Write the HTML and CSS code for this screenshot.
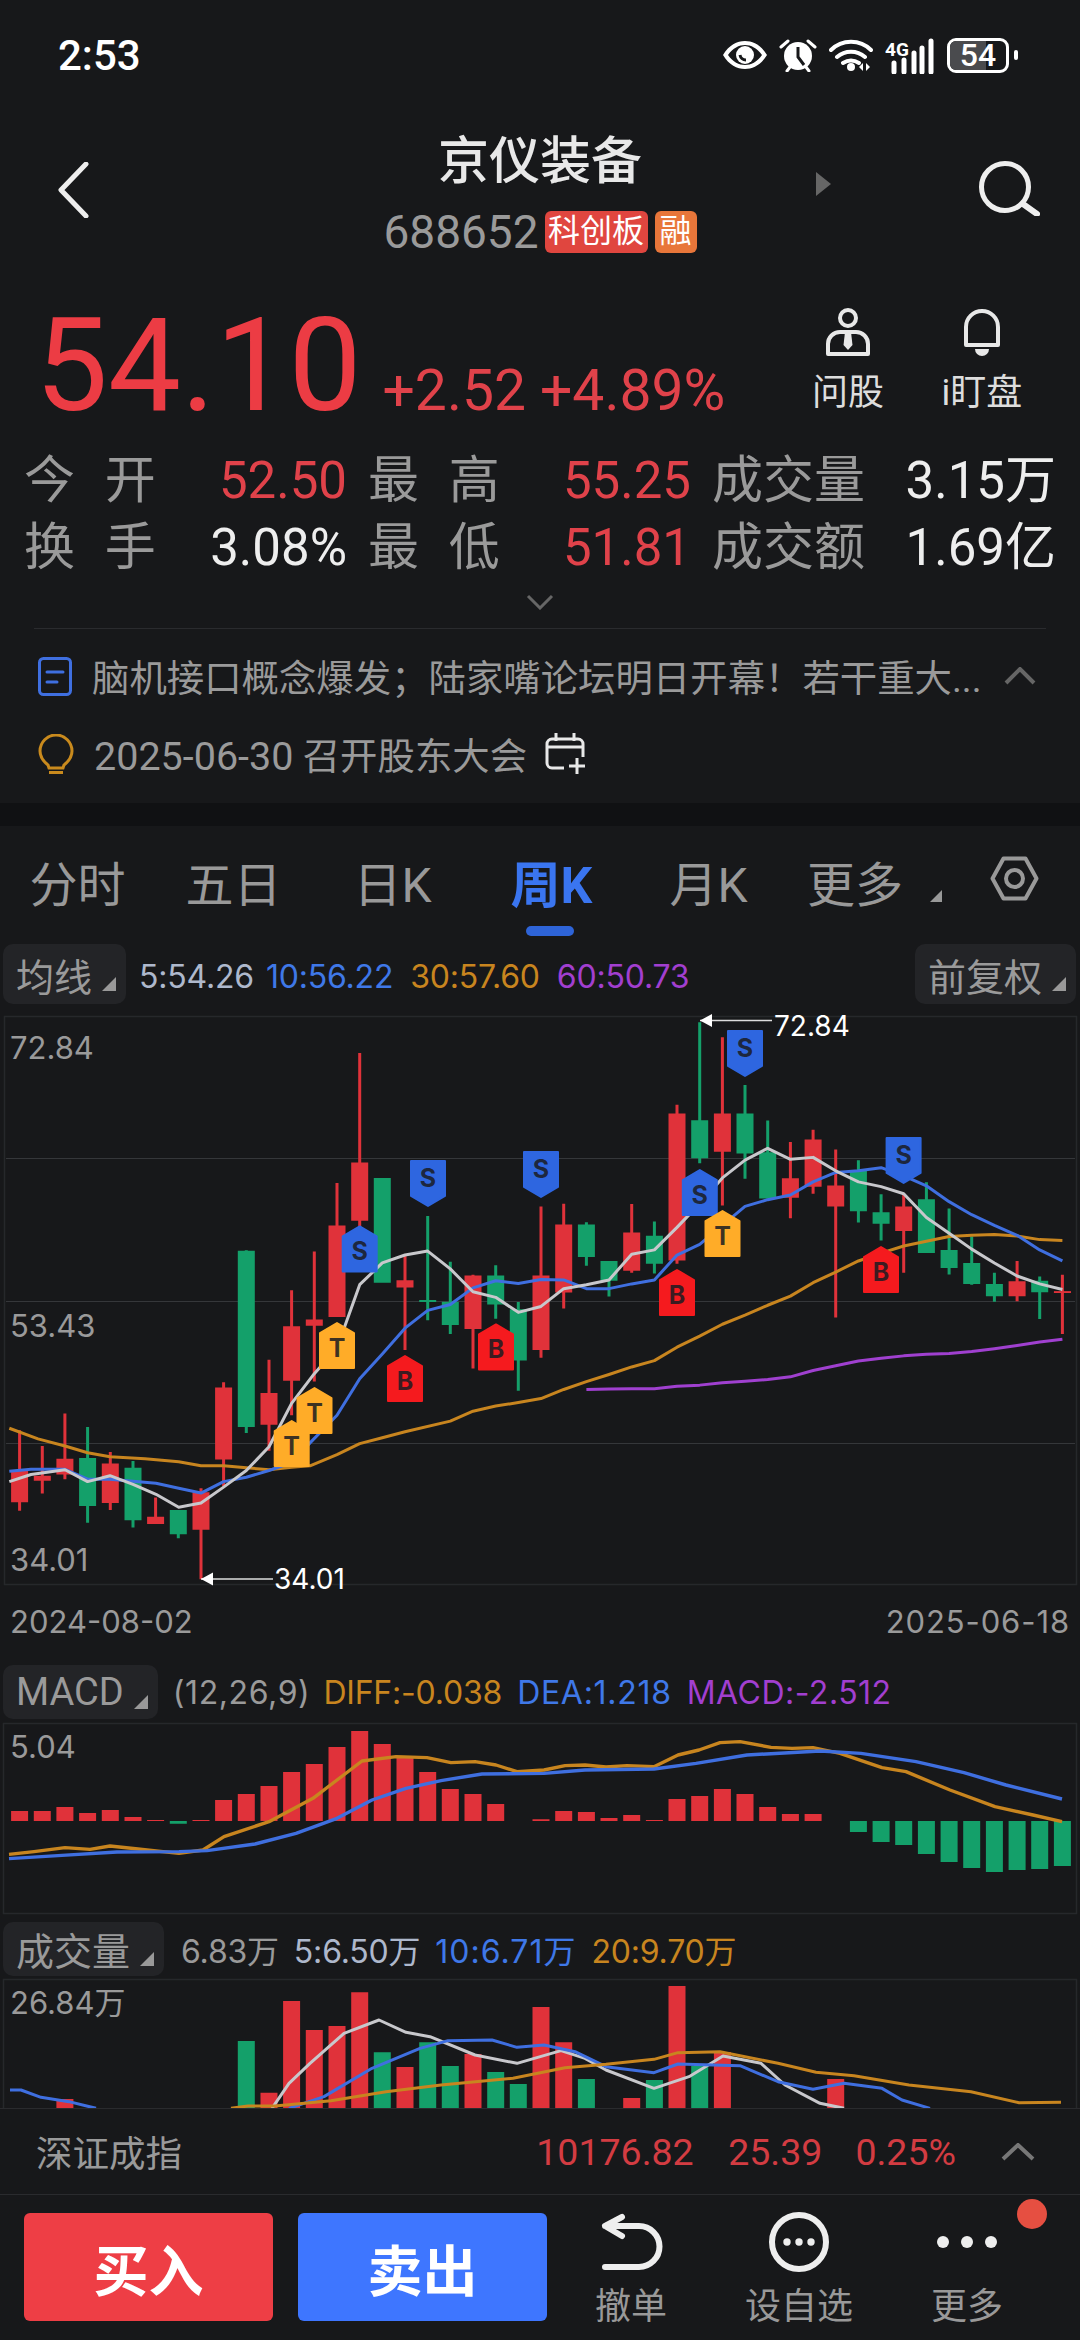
FILE: index.html
```html
<!DOCTYPE html>
<html lang="zh-CN">
<head>
<meta charset="utf-8">
<title>京仪装备</title>
<link rel="stylesheet" href="styles.css">
</head>
<body>
<div class="page">
  <div class="status">
    <span class="time">2:53</span>
    <div class="status-icons">
      <svg width="44" height="28" viewBox="0 0 44 28"><path class="i-fill" fill-rule="evenodd" d="M0 14C6 4 14 0 22 0s16 4 22 14c-6 10-14 14-22 14S6 24 0 14zm5 0c5 7 11 10 17 10s12-3 17-10C34 7 28 4 22 4S10 7 5 14z"/><circle class="i-fill" cx="22" cy="14" r="9"/><path d="M17 14a6 6 0 0 0 6 5" fill="none" stroke="#17181a" stroke-width="3"/></svg>
      <svg width="38" height="34" viewBox="0 0 38 34"><circle class="i-fill" cx="19" cy="18" r="14"/><path d="M19 9v10l6 8" fill="none" stroke="#17181a" stroke-width="3"/><path d="M2 9l7-6M36 9l-7-6M8 33l3-4M30 33l-3-4" class="i-line" stroke-width="3"/></svg>
      <svg width="44" height="32" viewBox="0 0 44 32"><path d="M2 11C13 0 31 0 42 11M8 18c8-7 20-7 28 0M14 24c5-3 11-3 16 0" class="i-line" stroke-width="4"/><circle class="i-fill" cx="22" cy="28" r="4"/><path class="i-fill" d="M34 24v8l-4-4zM37 24v8l4-4z"/></svg>
      <svg width="50" height="38" viewBox="0 -4 50 38"><text class="net" x="0" y="16">4G</text><path d="M9 23v9M19 20v12M29 13v19M37 8v24M46 1v31" class="i-line" stroke-width="5"/></svg>
      <div class="battery"><span class="battery-fill"></span><span class="battery-num">54</span></div>
      <span class="battery-nub"></span>
    </div>
  </div>

  <header class="nav">
    <div class="nav-left">
      <svg width="32" height="56" viewBox="0 0 32 56"><path d="M28 2L3 28l25 26" fill="none" stroke="#eee" stroke-width="5" stroke-linecap="round" stroke-linejoin="round"/></svg>
    </div>
    <div class="nav-center">
      <h1 class="title">京仪装备</h1>
      <div class="code-row">
        <span class="code">688652</span>
        <span class="badge badge-red">科创板</span>
        <span class="badge badge-orange">融</span>
      </div>
    </div>
    <div class="nav-right">
      <span class="nav-tri"></span>
      <svg width="62" height="56" viewBox="0 0 62 56"><circle cx="27" cy="27" r="23.500" fill="none" stroke="#eee" stroke-width="5"/><path d="M45 44l14 10" stroke="#eee" stroke-width="6" stroke-linecap="round"/></svg>
    </div>
  </header>

  <section class="quote">
    <span class="price">54.10</span>
    <span class="change">+2.52</span>
    <span class="change change-2">+4.89%</span>
    <div class="actions">
      <div class="action">
        <svg width="46" height="48" viewBox="0 0 46 48"><circle cx="23" cy="10" r="8" fill="none" stroke="#e8e8e8" stroke-width="4"/><path d="M3 46V36a12 12 0 0 1 12-12h16a12 12 0 0 1 12 12v10z" fill="none" stroke="#e8e8e8" stroke-width="4" stroke-linejoin="round"/><path fill="#e8e8e8" d="M20 24h6l1.500 13L23 42l-4.500-5z"/></svg>
        <span class="action-label">问股</span>
      </div>
      <div class="action">
        <svg width="38" height="48" viewBox="0 0 38 48"><path d="M3 37V19a16 16 0 0 1 32 0v18z" fill="none" stroke="#e8e8e8" stroke-width="4" stroke-linejoin="round"/><path fill="#e8e8e8" d="M12 41h14a7 7 0 0 1-14 0z"/></svg>
        <span class="action-label">i盯盘</span>
      </div>
    </div>
  </section>

  <section class="stats">
    <div class="stat"><span class="stat-label">今 开</span><span class="up">52.50</span></div>
    <div class="stat"><span class="stat-label">最 高</span><span class="up">55.25</span></div>
    <div class="stat"><span class="stat-label">成交量</span><span class="flat">3.15万</span></div>
    <div class="stat"><span class="stat-label">换 手</span><span class="flat">3.08%</span></div>
    <div class="stat"><span class="stat-label">最 低</span><span class="up">51.81</span></div>
    <div class="stat"><span class="stat-label">成交额</span><span class="flat">1.69亿</span></div>
  </section>

  <div class="expand"><svg width="28" height="16" viewBox="0 0 28 16"><path d="M2 2l12 12L26 2" fill="none" stroke="#666" stroke-width="3"/></svg></div>

  <section class="notes">
    <div class="note">
      <svg width="34" height="39" viewBox="0 0 34 39"><rect x="1.500" y="1.500" width="31" height="36" rx="4" fill="none" stroke="#3f6fe0" stroke-width="3"/><path d="M9 15h16M9 25h10" stroke="#3f6fe0" stroke-width="3" stroke-linecap="round"/></svg>
      <span class="note-text">脑机接口概念爆发；陆家嘴论坛明日开幕！若干重大...</span>
      <svg class="note-up" width="32" height="18" viewBox="0 0 32 18"><path d="M2 16L16 2l14 14" fill="none" stroke="#666" stroke-width="4"/></svg>
    </div>
    <div class="note">
      <svg width="36" height="41" viewBox="0 0 36 41"><path d="M10 31C5 27 2 22 2 17a16 16 0 1 1 32 0c0 5-3 10-8 14l-1 3H11zM11 38.500h14" fill="none" stroke="#c98a1d" stroke-width="3"/></svg>
      <span class="note-text"><span class="note-date">2025-06-30</span> 召开股东大会</span>
      <svg class="note-cal" width="42" height="42" viewBox="0 0 42 42"><path d="M20 35H8a5 5 0 0 1-5-5V11a5 5 0 0 1 5-5h26a5 5 0 0 1 5 5v13M3 14h36M12 0v8M30 0v8M33 25v16M25 33h16" fill="none" stroke="#e8e8e8" stroke-width="3"/></svg>
    </div>
  </section>

  <div class="band"></div>

  <nav class="tabs">
    <span class="tab">分时</span>
    <span class="tab">五日</span>
    <span class="tab">日K</span>
    <span class="tab tab-active">周K</span>
    <span class="tab">月K</span>
    <span class="tab tab-more">更多<i class="tri tri-more"></i></span>
    <svg class="tab-gear" width="49" height="45" viewBox="0 0 49 45"><path d="M2.500 22.500L13.500 2.500h22l11 20-11 20h-22z" fill="none" stroke="#999" stroke-width="4" stroke-linejoin="round"/><circle cx="24.500" cy="22.500" r="8.500" fill="none" stroke="#999" stroke-width="4"/></svg>
  </nav>

  <div class="ind-row ind-ma">
    <span class="chip">均线<i class="tri"></i></span>
    <span class="val pale">5:54.26</span>
    <span class="val blue">10:56.22</span>
    <span class="val orange">30:57.60</span>
    <span class="val purple">60:50.73</span>
    <span class="chip chip-right">前复权<i class="tri"></i></span>
  </div>

  <svg class="chart" width="1080" height="600" viewBox="0 1004 1080 600">
    <rect class="frame" x="4.500" y="1016.500" width="1072" height="568"/>
    <path class="grid" d="M6 1158.500H1075M6 1301.500H1075M6 1443.500H1075"/>
    <g transform="translate(0 1000) scale(1 .39541)">
      <path class="wick red" d="M19.600 1088V1292M42.300 1128V1248M64.900 1046V1212M110.300 1143V1290M155.600 1258V1325M201 1235V1465M223.600 967V1230M269 910V1140M291.600 734V1050M314.300 636V965M337 463V802M359.700 134V600M405 645V885M473 695V932M541 522V905M563.700 515V780M631.700 516V690M677 265V667M722.400 94V520M790.400 359V552M813.100 328V490M835.700 378V803M903.700 490V690M1017.100 660V762M1062.400 695V845"/>
      <path class="body red" d="M19.600 1190V1270M42.300 1203V1216M64.900 1160V1200M110.300 1172V1272M155.600 1307V1325M201 1245V1340M223.600 980V1162M269 994V1074M291.600 825V963M314.300 808V824M337 570V802M359.700 411V558M405 709V727M473 697V832M541 697V885M563.700 568V740M631.700 588V685M677 287V659M722.400 287V384M790.400 451V500M813.100 353V472M835.700 469V522M903.700 522V584M1017.100 711V749M1062.400 737V741"/>
      <path class="wick green" d="M87.600 1080V1322M133 1166V1334M178.300 1290V1361M246.300 633V1095M427.700 546V810M450.300 662V845M495.700 671V806M518.300 764V988M586.400 562V672M609 660V750M654.400 560V692M699.700 56V413M745 215V452M767.700 305V502M858.400 405V563M881.100 491V608M926.400 461V640M949.100 527V694M971.700 598V720M994.400 690V763M1039.700 699V807"/>
      <path class="body green" d="M87.600 1158V1280M133 1183V1316M178.300 1290V1351M246.300 634V1080M382.300 450V715M427.700 759V764M450.300 763V822M495.700 697V770M518.300 782V912M586.400 568V650M609 660V710M654.400 596V667M699.700 304V400M745 287V388M767.700 385V502M858.400 430V534M881.100 537V566M926.400 504V640M949.100 632V678M971.700 665V718M994.400 718V749M1039.700 710V739"/>
      <polyline class="ma ma-orange" points="9.300,1083 38,1110 65,1128 87.600,1145 110,1155 145,1160 178.700,1168 201,1178 223.600,1178 246.300,1183 269,1188 291.600,1182 310,1178 337,1150 359.700,1122 382.300,1107 405,1092 450.300,1065 473,1040 495.700,1027 518.300,1018 541,1008 563.700,985 586.400,965 609,947 631.700,928 654.400,912 677,878 699.700,850 722.400,820 745,797 767.700,772 790.400,749 813.100,715 835.700,688 858.400,660 881.100,640 903.700,622 926.400,610 949.100,598 971.700,595 994.400,593 1017.100,597 1039.700,606 1062.400,608"/>
      <polyline class="ma ma-purple" points="586.400,985 609,984 631.700,983 654.400,983 677,977 699.700,974 722.400,968 745,964 767.700,960 790.400,953 813.100,937 835.700,925 858.400,913 881.100,906 903.700,900 926.400,896 949.100,894 971.700,889 994.400,882 1017.100,874 1039.700,865 1062.400,858"/>
      <polyline class="ma ma-blue" points="9.300,1192 31,1187 65,1187 87.600,1212 110,1212 133,1217 156,1222 178.700,1235 201,1247 223.600,1218 246.300,1207 269,1190 291.600,1170 310,1120 337,1050 359.700,958 382.300,895 405,830 427.700,785 450.300,770 473,728 495.700,710 518.300,717 541,707 563.700,708 586.400,730 609,730 631.700,718 654.400,708 677,645 699.700,618 722.400,570 745,522 767.700,505 790.400,493 813.100,460 835.700,436 858.400,432 881.100,424 903.700,445 926.400,470 949.100,510 971.700,543 994.400,570 1017.100,595 1039.700,632 1062.400,660"/>
      <polyline class="ma ma-white" points="9.300,1218 31,1200 65,1188 87.600,1218 110,1203 133,1225 156,1250 178.700,1283 201,1272 223.600,1232 246.300,1190 269,1130 291.600,1020 314.300,945 337,880 359.700,720 382.300,665 405,645 427.700,635 450.300,680 473,738 495.700,752 518.300,790 541,775 563.700,730 586.400,720 609,708 631.700,643 654.400,632 677,575 699.700,515 722.400,450 745,405 767.700,375 790.400,403 813.100,398 835.700,432 858.400,460 881.100,472 903.700,490 926.400,550 949.100,590 971.700,630 994.400,665 1017.100,698 1039.700,718 1062.400,732"/>
    </g>
    <path d="M1054 1292H1071" stroke="#e0323a" stroke-width="1.500"/>
    <text class="ax" x="10" y="1059">72.84</text>
    <text class="ax" x="10" y="1337">53.43</text>
    <text class="ax" x="10" y="1571">34.01</text>
    <path class="anno-line" d="M700 1020.500H772M201 1579H273"/>
    <path class="anno-head" d="M700 1020.500l12-6.500v13zM201 1579l12-6.500v13z"/>
    <text class="anno" x="774" y="1036">72.84</text>
    <text class="anno" x="274" y="1589">34.01</text>
    <g transform="translate(341.700 1225.400)"><path class="mk mk-s" d="M1 11L18 1l17 10v35H1z"/><text class="mk-t" x="18" y="35">S</text></g>
    <g transform="translate(410 1160)"><path class="mk mk-s" d="M1 1h34v35L18 46 1 36z"/><text class="mk-t" x="18" y="27">S</text></g>
    <g transform="translate(523 1151)"><path class="mk mk-s" d="M1 1h34v35L18 46 1 36z"/><text class="mk-t" x="18" y="27">S</text></g>
    <g transform="translate(727 1030)"><path class="mk mk-s" d="M1 1h34v35L18 46 1 36z"/><text class="mk-t" x="18" y="27">S</text></g>
    <g transform="translate(681.800 1169)"><path class="mk mk-s" d="M1 11L18 1l17 10v35H1z"/><text class="mk-t" x="18" y="35">S</text></g>
    <g transform="translate(885.600 1137)"><path class="mk mk-s" d="M1 1h34v35L18 46 1 36z"/><text class="mk-t" x="18" y="27">S</text></g>
    <g transform="translate(273.700 1420)"><path class="mk mk-t-bg" d="M1 11L18 1l17 10v35H1z"/><text class="mk-t" x="18" y="35">T</text></g>
    <g transform="translate(296.500 1387)"><path class="mk mk-t-bg" d="M1 11L18 1l17 10v35H1z"/><text class="mk-t" x="18" y="35">T</text></g>
    <g transform="translate(319 1322)"><path class="mk mk-t-bg" d="M1 11L18 1l17 10v35H1z"/><text class="mk-t" x="18" y="35">T</text></g>
    <g transform="translate(704.500 1210)"><path class="mk mk-t-bg" d="M1 11L18 1l17 10v35H1z"/><text class="mk-t" x="18" y="35">T</text></g>
    <g transform="translate(387 1355)"><path class="mk mk-b" d="M1 11L18 1l17 10v35H1z"/><text class="mk-t" x="18" y="35">B</text></g>
    <g transform="translate(478 1323.400)"><path class="mk mk-b" d="M1 11L18 1l17 10v35H1z"/><text class="mk-t" x="18" y="35">B</text></g>
    <g transform="translate(659 1269)"><path class="mk mk-b" d="M1 11L18 1l17 10v35H1z"/><text class="mk-t" x="18" y="35">B</text></g>
    <g transform="translate(863 1246)"><path class="mk mk-b" d="M1 11L18 1l17 10v35H1z"/><text class="mk-t" x="18" y="35">B</text></g>
  </svg>

  <div class="dates"><span>2024-08-02</span><span class="date-end">2025-06-18</span></div>

  <div class="ind-row ind-macd">
    <span class="chip">MACD<i class="tri"></i></span>
    <span class="val muted">(12,26,9)</span>
    <span class="val orange">DIFF:-0.038</span>
    <span class="val blue">DEA:1.218</span>
    <span class="val purple">MACD:-2.512</span>
  </div>

  <svg class="chart chart-macd" width="1080" height="195" viewBox="0 1720 1080 195">
    <rect class="frame" x="3.500" y="1723.500" width="1073" height="190"/>
    <g transform="translate(0 1620) scale(1 .33333)">
      <path class="body red" d="M19.600 603V573M42.300 603V573M64.900 603V561M87.600 603V579M110.300 603V570M133 603V591M155.600 603V600M201 603V600M223.600 603V540M246.300 603V522M269 603V498M291.600 603V456M314.300 603V432M337 603V381M359.700 603V333M382.300 603V372M405 603V411M427.700 603V456M450.300 603V507M473 603V522M495.700 603V552M541 603V598M563.700 603V573M586.400 603V576M609 603V594M631.700 603V585M654.400 603V600M677 603V537M699.700 603V528M722.400 603V507M745 603V522M767.700 603V561M790.400 603V582M813.100 603V582"/>
      <path class="body green" d="M178.300 603V611M858.400 603V636M881.100 603V666M903.700 603V675M926.400 603V702M949.100 603V726M971.700 603V744M994.400 603V756M1017.100 603V750M1039.700 603V747M1062.400 603V738"/>
      <polyline class="ma ma-orange" points="9,703 34,695 65,683 90,688 110,678 138,687 179,700 203,690 224,650 269,605 313,535 337,480 362,423 396,410 427,413 451,428 475,425 496,435 517,455 544,450 565,437 585,435 606,441 627,437 654,440 678,405 699,390 720,368 740,365 771,382 792,385 813,383 840,400 882,443 906,455 950,510 995,560 1033,585 1062,605"/>
      <polyline class="ma ma-blue" points="9,716 62,706 117,696 179,695 207,692 255,672 296,640 337,595 372,540 406,505 441,482 482,462 544,460 585,450 654,447 696,430 747,405 820,393 861,400 916,425 964,458 1006,495 1062,537"/>
    </g>
    <text class="ax" x="10" y="1758">5.04</text>
  </svg>

  <div class="ind-row ind-vol">
    <span class="chip">成交量<i class="tri"></i></span>
    <span class="val muted">6.83万</span>
    <span class="val pale">5:6.50万</span>
    <span class="val blue">10:6.71万</span>
    <span class="val orange">20:9.70万</span>
  </div>

  <svg class="chart chart-vol" width="1080" height="131" viewBox="0 1977 1080 131">
    <path class="frame" d="M3.500 2108V1979.500H1076.500V2108"/>
    <g transform="translate(0 1900) scale(1 .33333)">
      <path class="body red" d="M64.900 625V597M269 625V578M291.600 625V303M314.300 625V390M337 625V378M359.700 625V277M405 625V501M473 625V462M541 625V321M563.700 625V427M631.700 625V594M677 625V258M722.400 625V456M835.700 625V537"/>
      <path class="body green" d="M246.300 625V423M382.300 625V457M427.700 625V427M450.300 625V498M495.700 625V516M518.300 625V552M586.400 625V537M654.400 625V540M699.700 625V498"/>
      <polyline class="ma ma-white" points="272,625 289,550 310,490 344,400 379,360 406,397 430,410 475,465 517,490 561,452 585,475 606,510 654,565 689,530 723,468 761,490 785,555 820,610 844,625"/>
      <polyline class="ma ma-blue" points="10,570 21,570 41,592 69,605 96,625"/>
      <polyline class="ma ma-blue" points="289,625 324,590 372,505 420,445 448,422 492,420 517,442 544,435 575,455 606,500 654,518 678,492 740,497 778,545 813,568 844,550 882,565 902,600 930,625"/>
      <polyline class="ma ma-orange" points="231,625 248,618 275,618 331,602 386,575 441,555 513,535 565,503 606,493 654,478 678,458 720,455 778,490 816,517 854,527 909,555 971,575 1019,608 1061,607"/>
    </g>
    <text class="ax" x="10" y="2014">26.84万</text>
  </svg>

  <div class="index-bar">
    <span class="index-name">深证成指</span>
    <span class="index-val i-1">10176.82</span>
    <span class="index-val i-2">25.39</span>
    <span class="index-val i-3">0.25%</span>
    <svg class="index-up" width="34" height="18" viewBox="0 0 34 18"><path d="M2 16L17 2l15 14" fill="none" stroke="#777" stroke-width="4"/></svg>
  </div>

  <footer class="bottom">
    <span class="btn btn-buy">买入</span>
    <span class="btn btn-sell">卖出</span>
    <div class="tool">
      <svg width="64" height="60" viewBox="0 0 64 60"><path d="M6 14h34a20.500 20.500 0 0 1 0 41H6M23 5L6 14l17 10" fill="none" stroke="#eee" stroke-width="6" stroke-linecap="round" stroke-linejoin="round"/></svg>
      <span class="tool-label">撤单</span>
    </div>
    <div class="tool">
      <svg width="62" height="60" viewBox="0 0 62 60"><circle cx="31" cy="30" r="27" fill="none" stroke="#eee" stroke-width="6"/><circle cx="19" cy="30" r="3.700" fill="#eee"/><circle cx="31" cy="30" r="3.700" fill="#eee"/><circle cx="43" cy="30" r="3.700" fill="#eee"/></svg>
      <span class="tool-label">设自选</span>
    </div>
    <div class="tool">
      <svg width="62" height="60" viewBox="0 0 62 60"><circle cx="7" cy="30" r="6" fill="#eee"/><circle cx="31" cy="30" r="6" fill="#eee"/><circle cx="55" cy="30" r="6" fill="#eee"/></svg>
      <span class="tool-label">更多</span>
    </div>
    <span class="red-dot"></span>
  </footer>
</div>
</body>
</html>
```
FILE: styles.css
```css
* { box-sizing: border-box; }
html, body { margin: 0; padding: 0; background: #17181a; }
body { font-family: Roboto, "Noto Sans CJK SC", sans-serif; color: #eee; }
.page { width: 1080px; height: 2340px; overflow: hidden; display: flex; flex-direction: column; position: relative; background: #17181a; }

.status { height: 110px; flex: none; display: flex; align-items: center; justify-content: space-between; padding: 0 62px 0 58px; }
.time { font-size: 42px; font-weight: 500; color: #fff; }
.status-icons { display: flex; align-items: center; gap: 12px; }
.i-fill { fill: #fff; }
.i-line { fill: none; stroke: #fff; stroke-linecap: round; }
.net { font-family: Roboto, sans-serif; font-size: 19px; font-weight: 700; fill: #fff; }
.battery { position: relative; width: 62px; height: 35px; border: 3px solid #fff; border-radius: 9px; overflow: hidden; display: flex; align-items: center; justify-content: center; }
.battery-fill { position: absolute; left: 0; top: 0; bottom: 0; width: 36px; background: #4a4b4e; }
.battery-num { position: relative; font-size: 32px; font-weight: 500; color: #fff; line-height: 1; }
.battery-nub { width: 4px; height: 10px; background: #fff; border-radius: 2px; margin-left: -7px; }

.nav { height: 160px; flex: none; display: grid; grid-template-columns: 1fr auto 1fr; align-items: start; }
.nav-left { padding: 52px 0 0 58px; }
.nav-center { display: flex; flex-direction: column; align-items: center; }
.title { margin: 22px 0 0; font-size: 51px; font-weight: 500; line-height: 60px; color: #e8e8e8; }
.code-row { display: flex; align-items: center; margin-top: 18px; height: 44px; white-space: nowrap; }
.code { font-size: 46px; color: #9a9a9a; margin-right: 6px; }
.badge { height: 42px; border-radius: 6px; color: #fff; font-size: 32px; line-height: 41px; text-align: center; white-space: nowrap; }
.badge-red { background: #e0463f; width: 103px; }
.badge-orange { background: #e8763a; margin-left: 7px; width: 42px; }
.nav-right { display: flex; justify-content: flex-end; align-items: flex-start; padding: 50px 40px 0 0; position: relative; }
.nav-tri { position: absolute; left: 119px; top: 62px; width: 0; height: 0; border-left: 15px solid #666; border-top: 12px solid transparent; border-bottom: 12px solid transparent; }

.quote { height: 177px; flex: none; display: flex; align-items: baseline; padding: 21px 31px 0 35px; }
.price { font-size: 130px; line-height: 150px; color: #ec3c44; font-weight: 400; }
.change { font-size: 57px; color: #e0424a; margin-left: 21px; }
.change-2 { margin-left: 14px; }
.actions { margin-left: auto; margin-top: 17px; align-self: flex-start; display: flex; }
.action { width: 134px; display: flex; flex-direction: column; align-items: center; }
.action-label { font-size: 36px; line-height: 50px; margin-top: 12px; color: #ddd; }

.stats { flex: none; padding: 0 24px; display: grid; grid-template-columns: 323px 323px 344px; column-gap: 21px; font-size: 51px; line-height: 67px; }
.stat { display: flex; justify-content: space-between; }
.stat-label { color: #9a9a9a; font-size: 51px; word-spacing: 17px; }
.up { color: #e0424a; }
.flat { color: #eee; }

.expand { height: 47px; flex: none; display: flex; justify-content: center; align-items: center; padding-bottom: 6px; }

.notes { flex: none; margin: 0 34px; border-top: 1px solid #2a2b2e; padding-top: 8px; height: 175px; }
.note { height: 78px; display: flex; align-items: center; gap: 20px; padding-left: 4px; }
.note-text { font-size: 37.400px; color: #9a9a9a; white-space: nowrap; }
.note-date { font-size: 39.500px; }
.note-up { margin-left: auto; margin-right: 10px; }
.note-cal { margin-left: -3px; }

.band { height: 23px; flex: none; background: #101113; }

.tabs { height: 118px; flex: none; display: grid; grid-template-columns: 155px 157px 161px 157px 157px 203px 49px; align-items: center; padding-bottom: 8px; }
.tab { font-size: 48px; color: #999; text-align: center; position: relative; }
.tab-active { color: #3a75f0; font-weight: 700; font-size: 50px; }
.tab-active::after { content: ""; position: absolute; left: 50%; margin-left: -26px; bottom: -19px; width: 48px; height: 10px; border-radius: 5px; background: #2e64d8; }
.tab-more { text-align: left; padding-left: 20px; }
.tab-gear { margin-top: -6px; }

.tri { display: inline-block; width: 0; height: 0; border-left: 14px solid transparent; border-bottom: 14px solid #999; margin-left: 10px; }
.tri-more { margin-left: 27px; border-left-width: 12px; border-bottom-width: 12px; }

.ind-row { height: 60px; flex: none; display: flex; align-items: center; padding-left: 3px; padding-right: 4px; }
.chip { height: 60px; border-radius: 10px; background: #232427; font-size: 38px; color: #9a9a9a; display: flex; align-items: center; padding: 0 10px 0 13px; white-space: nowrap; margin-right: 15px; }
.chip .tri { margin-top: 20px; }
.chip-right { margin-left: auto; margin-right: 0; }
.val { font-family: Inter, "Noto Sans CJK SC", sans-serif; font-size: 32px; margin-right: 15px; white-space: nowrap; letter-spacing: -.2px; }
.ind-ma .chip { margin-right: 13px; }
.ind-ma .chip-right { margin-right: 0; }
.ind-ma .val { margin-right: 17px; padding-top: 4px; }
.ind-ma .pale { margin-right: 12px; }
.ind-macd .muted { letter-spacing: .6px; margin-right: 13px; }
.ind-macd .blue { letter-spacing: .7px; }
.ind-macd .purple { letter-spacing: .5px; }
.ind-vol .chip { margin-right: 17px; }
.ind-vol .blue { letter-spacing: 1px; }
.pale { color: #aeb8cc; }
.blue { color: #3f78e8; }
.orange { color: #c8851f; }
.purple { color: #a23fd0; }
.muted { color: #9a9a9a; }

.chart { display: block; flex: none; }
.frame { fill: none; stroke: #26282b; stroke-width: 1.5; }
.grid { fill: none; stroke: #35373a; stroke-width: 1; }
.wick, .body { fill: none; }
.wick { stroke-width: 3; }
.body { stroke-width: 17; }
.wick.red, .body.red { stroke: #e0323a; }
.wick.green, .body.green { stroke: #14a06a; }
.ma { fill: none; stroke-width: 3; stroke-linejoin: round; vector-effect: non-scaling-stroke; }
.chart-macd .ma { stroke-width: 3.400; }
.ma-white { stroke: #c8c8cc; }
.ma-blue { stroke: #3f6fe0; }
.ma-orange { stroke: #c8851f; }
.ma-purple { stroke: #a040d0; }
.ax { font-family: Inter, "Noto Sans CJK SC", sans-serif; font-size: 31px; fill: #9a9a9a; }
.anno { font-family: Inter, sans-serif; font-size: 28px; fill: #fff; }
.anno-line { fill: none; stroke: #ddd; stroke-width: 1.5; }
.anno-head { fill: #fff; }
.mk { stroke-width: 2; stroke-linejoin: round; }
.mk-s { fill: #2e66e0; stroke: #2e66e0; }
.mk-t-bg { fill: #ffac28; stroke: #ffac28; }
.mk-b { fill: #f51a1e; stroke: #f51a1e; }
.mk-t { font-family: Inter, sans-serif; font-size: 25px; font-weight: 700; fill: #1a1c22; fill-opacity: .85; text-anchor: middle; }

.dates { height: 62px; flex: none; margin-top: -14px; display: flex; justify-content: space-between; align-items: center; padding: 0 10px; font-family: Inter, sans-serif; font-size: 31px; color: #9a9a9a; }
.date-end { letter-spacing: .9px; }
.ind-macd { margin-top: 12px; height: 56px; }
.ind-macd .chip, .ind-vol .chip { height: 54px; }
.ind-vol { margin-top: 5px; height: 57px; }

.index-bar { height: 87px; flex: none; border-top: 1px solid #2a2b2e; border-bottom: 1px solid #2a2b2e; display: flex; align-items: center; padding: 0 45px 0 36px; font-size: 37.500px; }
.index-name { color: #9a9a9a; font-size: 36.500px; }
.index-val { color: #d33c42; }
.i-1 { margin-left: auto; }
.i-2 { margin-left: 34.500px; }
.i-3 { margin-left: 33px; }
.index-up { margin-left: 45px; }

.bottom { height: 145px; flex: none; display: flex; align-items: flex-start; padding: 18px 0 0 24px; position: relative; }
.btn { width: 249px; height: 108px; border-radius: 6px; color: #fff; font-size: 55px; font-weight: 700; display: flex; align-items: center; justify-content: center; }
.btn-buy { background: #ee3e45; margin-right: 25px; }
.btn-sell { background: #3e76ff; }
.tool { width: 168px; display: flex; flex-direction: column; align-items: center; margin-top: -1px; }
.tool-label { font-size: 36px; color: #999; line-height: 46px; margin-top: 12px; }
.red-dot { position: absolute; left: 1017px; top: 4px; width: 30px; height: 30px; border-radius: 50%; background: #e64f41; }
```
